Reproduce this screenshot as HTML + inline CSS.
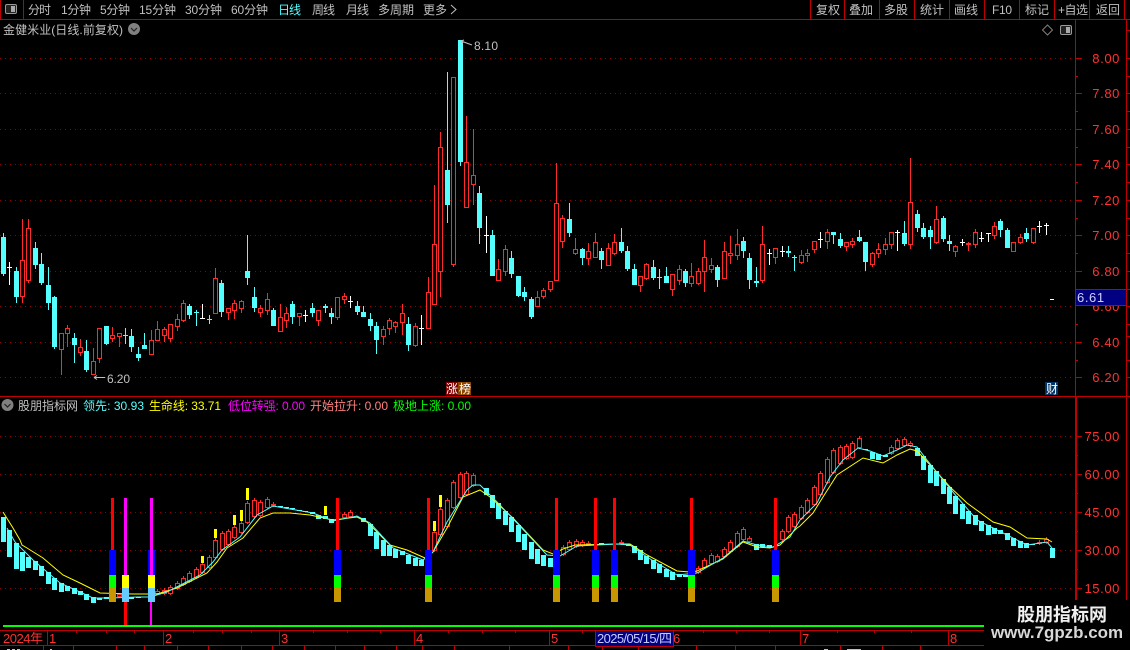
<!DOCTYPE html>
<html><head><meta charset="utf-8"><style>
html,body{margin:0;padding:0;background:#000;width:1130px;height:650px;overflow:hidden}
svg{display:block}
text{font-family:"Liberation Sans","Noto Sans CJK SC",sans-serif;font-size:12px}
.t{fill:#c0c0c0}.ax{fill:#ff3232;font-size:13px;text-anchor:end;letter-spacing:.6px}
.g{stroke:#900000;stroke-dasharray:1 4;fill:none}
.l{stroke:#c00000;fill:none}
.cw{stroke:#54ffff;fill:none}.cb{stroke:#54ffff;stroke-width:5;fill:none}
.rw{stroke:#ff2a2a;fill:none}.rb{stroke:#ff2a2a;fill:#000}
</style></head><body>
<svg width="1130" height="650" viewBox="0 0 1130 650" xmlns="http://www.w3.org/2000/svg">
<rect width="1130" height="650" fill="#000"/>
<g shape-rendering="crispEdges">
<path class="g" d="M0 58.5H1075M0 93.5H1075M0 129.5H1075M0 164.5H1075M0 200.5H1075M0 235.5H1075M0 271.5H1075M0 306.5H1075M0 342.5H1075M0 377.5H1075M0 436.5H1075M0 474.5H1075M0 512.5H1075M0 550.5H1075M0 588.5H1075"/>
<path class="l" d="M0 19.5H1130M0 396.5H1130M0.5 0V19M23.5 0V19M810.5 0V19M844.5 0V19M879.5 0V19M914.5 0V19M949.5 0V19M984.5 0V19M1019.5 0V19M1054.5 0V19M1089.5 0V19M1124.5 0V19M1075.5 19V650M1126.5 19V650M1076 58.5h6M1076 93.5h6M1076 129.5h6M1076 164.5h6M1076 200.5h6M1076 235.5h6M1076 271.5h6M1076 342.5h6M1076 377.5h6M1076 76.5h2M1076 111.5h2M1076 147.5h2M1076 182.5h2M1076 218.5h2M1076 253.5h2M1076 324.5h2M1076 360.5h2M1076 436.5h6M1076 474.5h6M1076 512.5h6M1076 550.5h6M1076 588.5h6M1076 455.5h2M1076 493.5h2M1076 531.5h2M1076 569.5h2M1127 30.5h3M1127 58.5h3M1127 76.5h3M1127 93.5h3M1127 111.5h3M1127 129.5h3M1127 147.5h3M1127 164.5h3M1127 182.5h3M1127 200.5h3M1127 218.5h3M1127 235.5h3M1127 253.5h3M1127 271.5h3M1127 289.5h3M1127 306.5h3M1127 324.5h3M1127 336.5h3M1127 360.5h3M1127 377.5h3"/>
<path class="l" d="M1076.5 397V600"/>
</g>
<!-- top icon -->
<rect x="5.5" y="4.5" width="11" height="9" rx="1.5" fill="#222" stroke="#999"/><rect x="11" y="6" width="4" height="6" fill="#aaa"/>
<g class="t">
<text x="28" y="14" textLength="23">分时</text>
<text x="61" y="14" textLength="30">1分钟</text>
<text x="100" y="14" textLength="30">5分钟</text>
<text x="139" y="14" textLength="37">15分钟</text>
<text x="185" y="14" textLength="37">30分钟</text>
<text x="231" y="14" textLength="37">60分钟</text>
<text x="278" y="14" textLength="23" style="fill:#54ffff">日线</text>
<text x="312" y="14" textLength="23">周线</text>
<text x="346" y="14" textLength="23">月线</text>
<text x="378" y="14" textLength="36">多周期</text>
<text x="423" y="14" textLength="24">更多</text>
<text x="816" y="14" textLength="24">复权</text>
<text x="849" y="14" textLength="24">叠加</text>
<text x="884" y="14" textLength="24">多股</text>
<text x="920" y="14" textLength="24">统计</text>
<text x="954" y="14" textLength="24">画线</text>
<text x="992" y="14" textLength="20">F10</text>
<text x="1025" y="14" textLength="24">标记</text>
<text x="1058" y="14" textLength="30">+自选</text>
<text x="1096" y="14" textLength="24">返回</text>
<text x="3" y="34" textLength="120">金健米业(日线.前复权)</text>
<text x="18" y="410" textLength="60">股朋指标网</text>
</g>
<path d="M451 5l5 4.5-5 4.5" fill="none" stroke="#c0c0c0"/>
<circle cx="134" cy="29" r="6" fill="#808080"/><path d="M131 28l3 3 3-3" fill="none" stroke="#222" stroke-width="1.2"/>
<circle cx="7.5" cy="405" r="6" fill="#808080"/><path d="M4.5 404l3 3 3-3" fill="none" stroke="#222" stroke-width="1.2"/>
<path d="M1047.5 25l5 5-5 5-5-5z" fill="none" stroke="#808080"/>
<rect x="1060.5" y="25.5" width="11" height="9" rx="1.5" fill="#222" stroke="#999"/><rect x="1066" y="27" width="4" height="6" fill="#aaa"/>
<!-- indicator header -->
<text x="83" y="410" textLength="61" style="fill:#54ffff">领先: 30.93</text>
<text x="149" y="410" textLength="72" style="fill:#ffff00">生命线: 33.71</text>
<text x="228" y="410" textLength="77" style="fill:#ff00ff">低位转强: 0.00</text>
<text x="310" y="410" textLength="78" style="fill:#ff8080">开始拉升: 0.00</text>
<text x="393" y="410" textLength="78" style="fill:#00ff00">极地上涨: 0.00</text>
<!-- axis labels -->
<g>
<text class="ax" x="1120" y="63">8.00</text><text class="ax" x="1120" y="98">7.80</text><text class="ax" x="1120" y="134">7.60</text><text class="ax" x="1120" y="169">7.40</text><text class="ax" x="1120" y="205">7.20</text><text class="ax" x="1120" y="240">7.00</text><text class="ax" x="1120" y="276">6.80</text><text class="ax" x="1120" y="311">6.60</text><text class="ax" x="1120" y="347">6.40</text><text class="ax" x="1120" y="382">6.20</text>
<text class="ax" x="1120" y="441">75.00</text><text class="ax" x="1120" y="479">60.00</text><text class="ax" x="1120" y="517">45.00</text><text class="ax" x="1120" y="555">30.00</text><text class="ax" x="1120" y="593">15.00</text>
</g>
<rect x="1076" y="289" width="50" height="16" fill="#000080"/><path class="l" d="M1076 289.5h50M1076 305.5h50" shape-rendering="crispEdges"/>
<text x="1077" y="302" style="fill:#d0d0ff;font-size:13px;letter-spacing:.6px">6.61</text>
<!-- main candles -->
<g shape-rendering="crispEdges">
<path class="cw" d="M3.5 233V276M16.5 267V303M35.5 242V269M41.5 253V285M48.5 267V310M54.5 296V349M74.5 333V363M86.5 340V372M106.5 326V345M125.5 328V344M131.5 329V352M138.5 347V361M144.5 333V349M189.5 304V319M196.5 310V326M209.5 315V324M221.5 280V317M247.5 235V285M254.5 287V312M273.5 308V326M292.5 301V324M312.5 303V317M325.5 304V313M331.5 308V324M357.5 301V315M363.5 306V317M370.5 313V331M376.5 322V354M408.5 317V351M447.5 72V223M460.5 40V166M479.5 186V244M492.5 230V276M511.5 251V278M518.5 276V297M524.5 287V301M531.5 297V319M569.5 203V237M582.5 248V265M601.5 248V269M621.5 228V253M627.5 246V271M634.5 264V285M653.5 260V280M659.5 269V289M666.5 267V283M685.5 269V287M717.5 265V287M743.5 237V258M749.5 253V289M756.5 267V287M788.5 246V257M794.5 255V271M833.5 232V244M840.5 233V248M859.5 230V242M865.5 242V271M904.5 221V246M917.5 210V232M923.5 223V239M930.5 226V249M943.5 216V242M949.5 235V251M1000.5 219V237M1007.5 228V248M1026.5 228V242"/>
<path class="cb" d="M3.5 237V274M16.5 271V297M35.5 248V265M41.5 264V283M48.5 285V303M54.5 297V347M74.5 338V345M86.5 351V370M106.5 326V344M125.5 335V336M131.5 336V347M138.5 354V358M144.5 345V349M189.5 306V315M196.5 312V313M209.5 319V320M221.5 283V312M247.5 271V278M254.5 297V308M273.5 310V326M292.5 304V317M312.5 308V313M325.5 306V308M331.5 313V317M357.5 306V312M363.5 312V317M370.5 319V326M376.5 326V340M408.5 324V345M447.5 170V205M460.5 40V162M479.5 193V228M492.5 235V276M511.5 258V274M518.5 276V296M524.5 292V297M531.5 299V317M569.5 219V233M582.5 249V258M601.5 251V260M621.5 242V251M627.5 251V269M634.5 269V285M653.5 267V278M659.5 277V278M666.5 276V283M685.5 271V283M717.5 267V280M743.5 241V251M749.5 258V280M756.5 281V283M788.5 251V253M794.5 257V258M833.5 232V235M840.5 239V246M859.5 237V241M865.5 242V262M904.5 233V244M917.5 214V228M923.5 228V237M930.5 230V237M943.5 218V239M949.5 241V244M1000.5 221V230M1007.5 230V248M1026.5 233V239"/>
<path class="rw" d="M22.5 219V303M28.5 219V283M61.5 333V375M67.5 325V347M80.5 339V356M93.5 348V375M99.5 328V363M112.5 327V342M119.5 333V347M151.5 330V355M157.5 321V341M164.5 327V342M170.5 324V342M177.5 314V331M183.5 300V322M215.5 268V314M228.5 308V320M234.5 300V319M241.5 300V313M260.5 305V317M267.5 293V315M280.5 304V332M286.5 307V328M299.5 313V326M318.5 310V326M337.5 297V320M344.5 293V304M383.5 326V345M389.5 318V335M395.5 321V333M402.5 304V335M415.5 323V347M428.5 277V329M434.5 185V305M440.5 132V297M453.5 77V267M466.5 116V208M473.5 129V205M498.5 259V281M505.5 245V276M537.5 291V307M543.5 288V299M550.5 281V292M556.5 163V281M562.5 215V248M575.5 238V255M588.5 243V265M595.5 233V258M608.5 243V266M614.5 234V255M640.5 276V292M646.5 263V280M672.5 274V296M679.5 265V285M691.5 263V287M698.5 268V285M704.5 240V292M711.5 258V273M724.5 242V279M730.5 236V264M737.5 229V260M762.5 226V283M775.5 248V264M801.5 250V264M807.5 249V262M814.5 241V253M827.5 229V249M846.5 242V251M852.5 238V248M872.5 252V267M878.5 243V258M885.5 238V255M891.5 232V249M910.5 158V249M936.5 206V244M955.5 245V257M968.5 242V251M975.5 229V248M994.5 222V239M1013.5 242V252M1020.5 234V244M1033.5 228V244"/>
<path class="rb" d="M20.5 260.5h4v36h-4zM26.5 228.5h4v52h-4zM59.5 333.5h4v16h-4zM65.5 328.5h4v5h-4zM78.5 347.5h4v5h-4zM91.5 361.5h4v13h-4zM97.5 328.5h4v30h-4zM110.5 335.5h4v3h-4zM117.5 333.5h4v3h-4zM149.5 340.5h4v14h-4zM155.5 329.5h4v11h-4zM162.5 329.5h4v6h-4zM168.5 324.5h4v14h-4zM175.5 319.5h4v7h-4zM181.5 303.5h4v17h-4zM213.5 278.5h4v35h-4zM226.5 308.5h4v4h-4zM232.5 303.5h4v7h-4zM239.5 301.5h4v7h-4zM258.5 308.5h4v4h-4zM265.5 299.5h4v11h-4zM278.5 317.5h4v14h-4zM284.5 313.5h4v7h-4zM297.5 313.5h4v3h-4zM316.5 310.5h4v10h-4zM335.5 297.5h4v20h-4zM342.5 296.5h4v3h-4zM381.5 329.5h4v7h-4zM387.5 320.5h4v8h-4zM393.5 322.5h4v4h-4zM400.5 313.5h4v9h-4zM413.5 326.5h4v19h-4zM426.5 292.5h4v36h-4zM432.5 244.5h4v60h-4zM438.5 147.5h4v124h-4zM451.5 77.5h4v187h-4zM464.5 162.5h4v45h-4zM471.5 175.5h4v9h-4zM496.5 269.5h4v11h-4zM503.5 249.5h4v22h-4zM535.5 297.5h4v9h-4zM541.5 290.5h4v6h-4zM548.5 281.5h4v8h-4zM554.5 203.5h4v77h-4zM560.5 218.5h4v23h-4zM573.5 249.5h4v4h-4zM586.5 251.5h4v7h-4zM593.5 242.5h4v15h-4zM606.5 248.5h4v17h-4zM612.5 242.5h4v11h-4zM638.5 276.5h4v9h-4zM644.5 264.5h4v14h-4zM670.5 274.5h4v15h-4zM677.5 269.5h4v11h-4zM689.5 276.5h4v7h-4zM696.5 271.5h4v12h-4zM702.5 257.5h4v14h-4zM709.5 265.5h4v4h-4zM722.5 251.5h4v27h-4zM728.5 253.5h4v2h-4zM735.5 244.5h4v11h-4zM760.5 244.5h4v36h-4zM773.5 248.5h4v9h-4zM799.5 255.5h4v7h-4zM805.5 253.5h4v2h-4zM812.5 241.5h4v8h-4zM825.5 232.5h4v9h-4zM844.5 242.5h4v4h-4zM850.5 241.5h4v3h-4zM870.5 253.5h4v11h-4zM876.5 249.5h4v4h-4zM883.5 244.5h4v5h-4zM889.5 232.5h4v12h-4zM908.5 202.5h4v42h-4zM934.5 219.5h4v23h-4zM953.5 246.5h4v5h-4zM966.5 243.5h4v1h-4zM973.5 232.5h4v12h-4zM992.5 226.5h4v9h-4zM1011.5 242.5h4v9h-4zM1018.5 237.5h4v5h-4zM1031.5 228.5h4v14h-4z"/>
<path stroke="#fff" fill="none" d="M9.5 262V285M7 267.5h5M202.5 304V319M200 318.5h5M305.5 310V322M303 315.5h5M350.5 296V308M348 301.5h5M421.5 315V345M419 328.5h5M486.5 216V253M484 235.5h5M769.5 249V265M767 253.5h5M782.5 246V257M780 251.5h5M820.5 232V248M818 239.5h5M897.5 230V251M895 232.5h5M962.5 239V246M960 242.5h5M981.5 232V242M979 238.5h5M988.5 233V242M986 233.5h5M1039.5 221V233M1037 226.5h5M1046.5 223V235M1044 225.5h5M1050 299.5h4"/>
<!-- indicator bars -->
<path class="cb" d="M3.5 517V542M9.5 530V557M16.5 543V569M22.5 552V571M28.5 557V568M35.5 561V570M41.5 566V576M48.5 572V584M54.5 578V590M61.5 583V592M67.5 586V591M74.5 588V594M80.5 591V595M86.5 594V600M93.5 597V603M99.5 598V600M106.5 597V599M131.5 597V599M138.5 597V598M280.5 506V507M286.5 507V508M292.5 508V509M299.5 510V511M305.5 511V512M312.5 512V514M318.5 515V519M325.5 516V519M331.5 519V523M363.5 518V522M370.5 524V536M376.5 532V549M383.5 540V556M389.5 545V556M395.5 549V558M402.5 551V555M408.5 555V564M415.5 558V566M421.5 560V566M486.5 488V495M492.5 495V508M498.5 503V519M505.5 511V525M511.5 517V532M518.5 525V542M524.5 534V550M531.5 542V559M537.5 549V564M543.5 555V566M550.5 558V567M601.5 543V545M628.5 544V546M634.5 546V553M640.5 550V560M646.5 556V564M653.5 560V569M659.5 564V573M666.5 569V577M672.5 572V580M679.5 574V577M685.5 575V577M756.5 544V550M762.5 544V547M769.5 545V548M865.5 449V450M872.5 452V459M878.5 454V460M885.5 455V457M917.5 448V456M923.5 456V470M930.5 465V483M936.5 471V486M943.5 479V494M949.5 487V504M955.5 496V514M962.5 504V519M968.5 511V524M975.5 515V525M981.5 521V531M988.5 525V535M994.5 528V534M1000.5 530V534M1007.5 533V540M1013.5 538V546M1020.5 541V548M1026.5 543V548M1032.5 544V545M1052.5 548V558"/>
<path class="rw" d="M119.5 593V598M157.5 589V595M164.5 588V595M170.5 585V595M177.5 581V590M183.5 576V586M189.5 571V583M196.5 567V579M202.5 562V574M209.5 555V569M215.5 538V559M222.5 531V551M228.5 529V546M234.5 525V539M241.5 521V534M247.5 501V524M254.5 498V518M260.5 500V517M267.5 497V509M273.5 502V507M344.5 512V519M350.5 510V518M434.5 530V552M440.5 507V536M447.5 498V528M453.5 480V509M460.5 472V499M466.5 471V496M473.5 473V487M563.5 545V556M569.5 540V551M576.5 539V548M582.5 540V547M588.5 541V546M621.5 540V545M698.5 566V574M704.5 558V569M711.5 553V565M717.5 554V563M724.5 547V558M730.5 540V553M737.5 531V548M743.5 527V541M749.5 536V543M782.5 529V541M788.5 515V533M794.5 512V528M801.5 505V520M807.5 498V514M814.5 485V506M820.5 471V496M827.5 457V484M833.5 448V474M840.5 445V465M846.5 444V460M852.5 441V459M859.5 436V449M891.5 445V455M897.5 438V450M904.5 437V447M910.5 441V447M1039.5 540V545M1046.5 537V544"/>
<path class="rb" d="M117.5 594.5h4v2h-4zM155.5 591.5h4v2h-4zM162.5 590.5h4v3h-4zM168.5 587.5h4v6h-4zM175.5 583.5h4v5h-4zM181.5 578.5h4v6h-4zM187.5 573.5h4v8h-4zM194.5 569.5h4v8h-4zM200.5 564.5h4v8h-4zM207.5 557.5h4v10h-4zM213.5 540.5h4v17h-4zM220.5 533.5h4v16h-4zM226.5 531.5h4v13h-4zM232.5 527.5h4v10h-4zM239.5 523.5h4v9h-4zM245.5 503.5h4v19h-4zM252.5 500.5h4v16h-4zM258.5 502.5h4v13h-4zM265.5 499.5h4v8h-4zM271.5 504.5h4v1h-4zM342.5 514.5h4v3h-4zM348.5 512.5h4v4h-4zM432.5 532.5h4v18h-4zM438.5 509.5h4v25h-4zM445.5 500.5h4v26h-4zM451.5 482.5h4v25h-4zM458.5 474.5h4v23h-4zM464.5 473.5h4v21h-4zM471.5 475.5h4v10h-4zM561.5 547.5h4v7h-4zM567.5 542.5h4v7h-4zM574.5 541.5h4v5h-4zM580.5 542.5h4v3h-4zM586.5 543.5h4v1h-4zM619.5 542.5h4v1h-4zM696.5 568.5h4v4h-4zM702.5 560.5h4v7h-4zM709.5 555.5h4v8h-4zM715.5 556.5h4v5h-4zM722.5 549.5h4v7h-4zM728.5 542.5h4v9h-4zM735.5 533.5h4v13h-4zM741.5 529.5h4v10h-4zM747.5 538.5h4v3h-4zM780.5 531.5h4v8h-4zM786.5 517.5h4v14h-4zM792.5 514.5h4v12h-4zM799.5 507.5h4v11h-4zM805.5 500.5h4v12h-4zM812.5 487.5h4v17h-4zM818.5 473.5h4v21h-4zM825.5 459.5h4v23h-4zM831.5 450.5h4v22h-4zM838.5 447.5h4v16h-4zM844.5 446.5h4v12h-4zM850.5 443.5h4v14h-4zM857.5 438.5h4v9h-4zM889.5 447.5h4v6h-4zM895.5 440.5h4v8h-4zM902.5 439.5h4v6h-4zM908.5 443.5h4v2h-4zM1037.5 542.5h4v1h-4zM1044.5 539.5h4v3h-4z"/>
</g>
<!-- lines -->
<polyline fill="none" stroke="#ffff00" points="3,512 13,528 20,540 22,545 27,548 43,558 63,575 80,583 100,593 133,594 157,594 177,588 207,573 217,562 227,548 243,538 260,518 273,513 290,513 310,515 333,520 357,517 367,522 390,545 407,550 425,558 433,552 447,528 463,497 480,490 490,497 513,518 543,550 553,554 563,549 575,545 617,544 630,544 647,555 677,571 690,572 697,571 723,559 743,542 757,547 770,548 780,545 797,528 800,526 813,513 823,497 837,475 863,458 883,463 897,455 910,449 917,451 933,468 950,487 967,503 993,522 1010,527 1027,538 1047,539 1052,542"/>
<polyline fill="none" stroke="#54ffff" points="7,528 15,542 33,560 60,583 93,598 110,598 137,597 150,597 167,592 200,575 213,562 222,550 240,537 257,515 273,506 290,509 313,513 333,521 357,516 370,523 393,548 423,560 433,552 447,522 467,490 473,485 480,485 497,502 517,523 547,555 560,556 577,546 617,544 630,545 647,557 677,575 697,573 723,558 743,541 757,545 773,547 790,537 800,520 817,503 830,477 843,460 858,448 870,451 883,456 897,450 907,445 917,447 927,460 943,480 957,497 977,520 1007,535 1027,545 1047,542 1052,548"/>
<!-- signals -->
<g shape-rendering="crispEdges">
<g id="s">
<rect x="111" y="498" width="3" height="52" fill="#ff0000"/><rect x="109" y="550" width="7" height="25" fill="#0000ff"/><rect x="109" y="575" width="7" height="13" fill="#00ff00"/><rect x="109" y="588" width="7" height="14" fill="#c89600"/>
<rect x="336" y="498" width="3" height="52" fill="#ff0000"/><rect x="334" y="550" width="7" height="25" fill="#0000ff"/><rect x="334" y="575" width="7" height="13" fill="#00ff00"/><rect x="334" y="588" width="7" height="14" fill="#c89600"/>
<rect x="427" y="498" width="3" height="52" fill="#ff0000"/><rect x="425" y="550" width="7" height="25" fill="#0000ff"/><rect x="425" y="575" width="7" height="13" fill="#00ff00"/><rect x="425" y="588" width="7" height="14" fill="#c89600"/>
<rect x="555" y="498" width="3" height="52" fill="#ff0000"/><rect x="553" y="550" width="7" height="25" fill="#0000ff"/><rect x="553" y="575" width="7" height="13" fill="#00ff00"/><rect x="553" y="588" width="7" height="14" fill="#c89600"/>
<rect x="594" y="498" width="3" height="52" fill="#ff0000"/><rect x="592" y="550" width="7" height="25" fill="#0000ff"/><rect x="592" y="575" width="7" height="13" fill="#00ff00"/><rect x="592" y="588" width="7" height="14" fill="#c89600"/>
<rect x="613" y="498" width="3" height="52" fill="#ff0000"/><rect x="611" y="550" width="7" height="25" fill="#0000ff"/><rect x="611" y="575" width="7" height="13" fill="#00ff00"/><rect x="611" y="588" width="7" height="14" fill="#c89600"/>
<rect x="690" y="498" width="3" height="52" fill="#ff0000"/><rect x="688" y="550" width="7" height="25" fill="#0000ff"/><rect x="688" y="575" width="7" height="13" fill="#00ff00"/><rect x="688" y="588" width="7" height="14" fill="#c89600"/>
<rect x="774" y="498" width="3" height="52" fill="#ff0000"/><rect x="772" y="550" width="7" height="25" fill="#0000ff"/><rect x="772" y="575" width="7" height="13" fill="#00ff00"/><rect x="772" y="588" width="7" height="14" fill="#c89600"/>
</g>
<rect x="124" y="498" width="3" height="77" fill="#ff00ff"/><rect x="122" y="575" width="7" height="13" fill="#ffff00"/><rect x="122" y="588" width="7" height="14" fill="#66ccff"/><rect x="124" y="602" width="3" height="24" fill="#ff0000"/>
<rect x="148" y="550" width="7" height="25" fill="#0000ff"/><rect x="150" y="498" width="3" height="77" fill="#ff00ff"/><rect x="148" y="575" width="7" height="13" fill="#ffff00"/><rect x="148" y="588" width="7" height="14" fill="#66ccff"/><rect x="150" y="602" width="2" height="24" fill="#ff00ff"/>
<!-- yellow markers -->
<path stroke="#ffff00" stroke-width="3" fill="none" d="M202.5 556V563M215.5 529V538M234.5 515V525M241.5 510V521M247.5 488V500M325.5 506V515M434.5 521V531M440.5 495V507"/>
<rect x="3" y="625" width="981" height="2" fill="#00ff00"/>
<path class="l" d="M0 630.5H984M0 645.5H984M47.5 631V645M163.5 631V645M279.5 631V645M414.5 631V645M549.5 631V645M800.5 631V645M948.5 631V645M43.5 646V650M73.5 646V650M116.5 646V650M144.5 646V650M177.5 646V650M208.5 646V650M241.5 646V650M272.5 646V650M304.5 646V650M335.5 646V650M364.5 646V650M396.5 646V650M422.5 646V650M454.5 646V650M509.5 646V650M568.5 646V650M602.5 646V650M638.5 646V650M696.5 646V650M735.5 646V650M775.5 646V650M840.5 646V650M882.5 646V650M920.5 646V650M76.5 631V633M106.5 631V633M134.5 631V633M193.5 631V633M222.5 631V633M251.5 631V633M313.5 631V633M347.5 631V633M380.5 631V633M448.5 631V633M482.5 631V633M515.5 631V633M582.5 631V633M703.5 631V633M736.5 631V633M769.5 631V633M837.5 631V633M874.5 631V633M911.5 631V633"/>
<path stroke="#c0c0c0" fill="none" d="M7 649.5h3M12 649.5h3M17 649.5h3M50 649.5h2M824 649.5h4M847 649.5h14"/>
</g>
<text x="3" y="643" textLength="40" style="fill:#ff3232;font-size:13px">2024年</text>
<text x="49" y="643" style="fill:#ff3232;font-size:13px">1</text>
<text x="165" y="643" style="fill:#ff3232;font-size:13px">2</text>
<text x="281" y="643" style="fill:#ff3232;font-size:13px">3</text>
<text x="416" y="643" style="fill:#ff3232;font-size:13px">4</text>
<text x="551" y="643" style="fill:#ff3232;font-size:13px">5</text>
<text x="673" y="643" style="fill:#ff3232;font-size:13px">6</text>
<text x="802" y="643" style="fill:#ff3232;font-size:13px">7</text>
<text x="950" y="643" style="fill:#ff3232;font-size:13px">8</text>
<rect x="596" y="631" width="77" height="15" fill="#000080"/>
<path class="l" d="M596 630.5h77M596 646.5h77M595.5 630V647M673.5 630V647" shape-rendering="crispEdges"/>
<text x="597" y="643" textLength="75" style="fill:#c8c8ff;font-size:13px">2025/05/15/四</text>
<!-- annotations -->
<path d="M94 377.5h11M94 377.5l3-2M94 377.5l3 2" stroke="#c0c0c0" fill="none"/>
<text x="107" y="383" textLength="23" class="t">6.20</text>
<path d="M461 41l11 4M461 41l2 2M461 41l3-1" stroke="#c0c0c0" fill="none"/>
<text x="474" y="50" textLength="24" class="t">8.10</text>
<rect x="446" y="382" width="12" height="13" fill="#800000"/><rect x="458" y="382" width="13" height="13" fill="#8b4500"/>
<text x="446" y="393" textLength="25" style="fill:#fff">涨榜</text>
<rect x="1045" y="382" width="13" height="13" fill="#003366"/>
<text x="1046" y="393" style="fill:#fff">财</text>
<!-- watermark -->
<rect x="984" y="600" width="146" height="50" fill="#000"/>
<text x="1017" y="621" textLength="90" style="fill:#f0f0f0;font-size:18px;font-weight:bold">股朋指标网</text>
<text x="991" y="638" textLength="132" lengthAdjust="spacingAndGlyphs" style="fill:#d8d8d8;font-size:17px;font-weight:bold">www.7gpzb.com</text>
</svg>
</body></html>
